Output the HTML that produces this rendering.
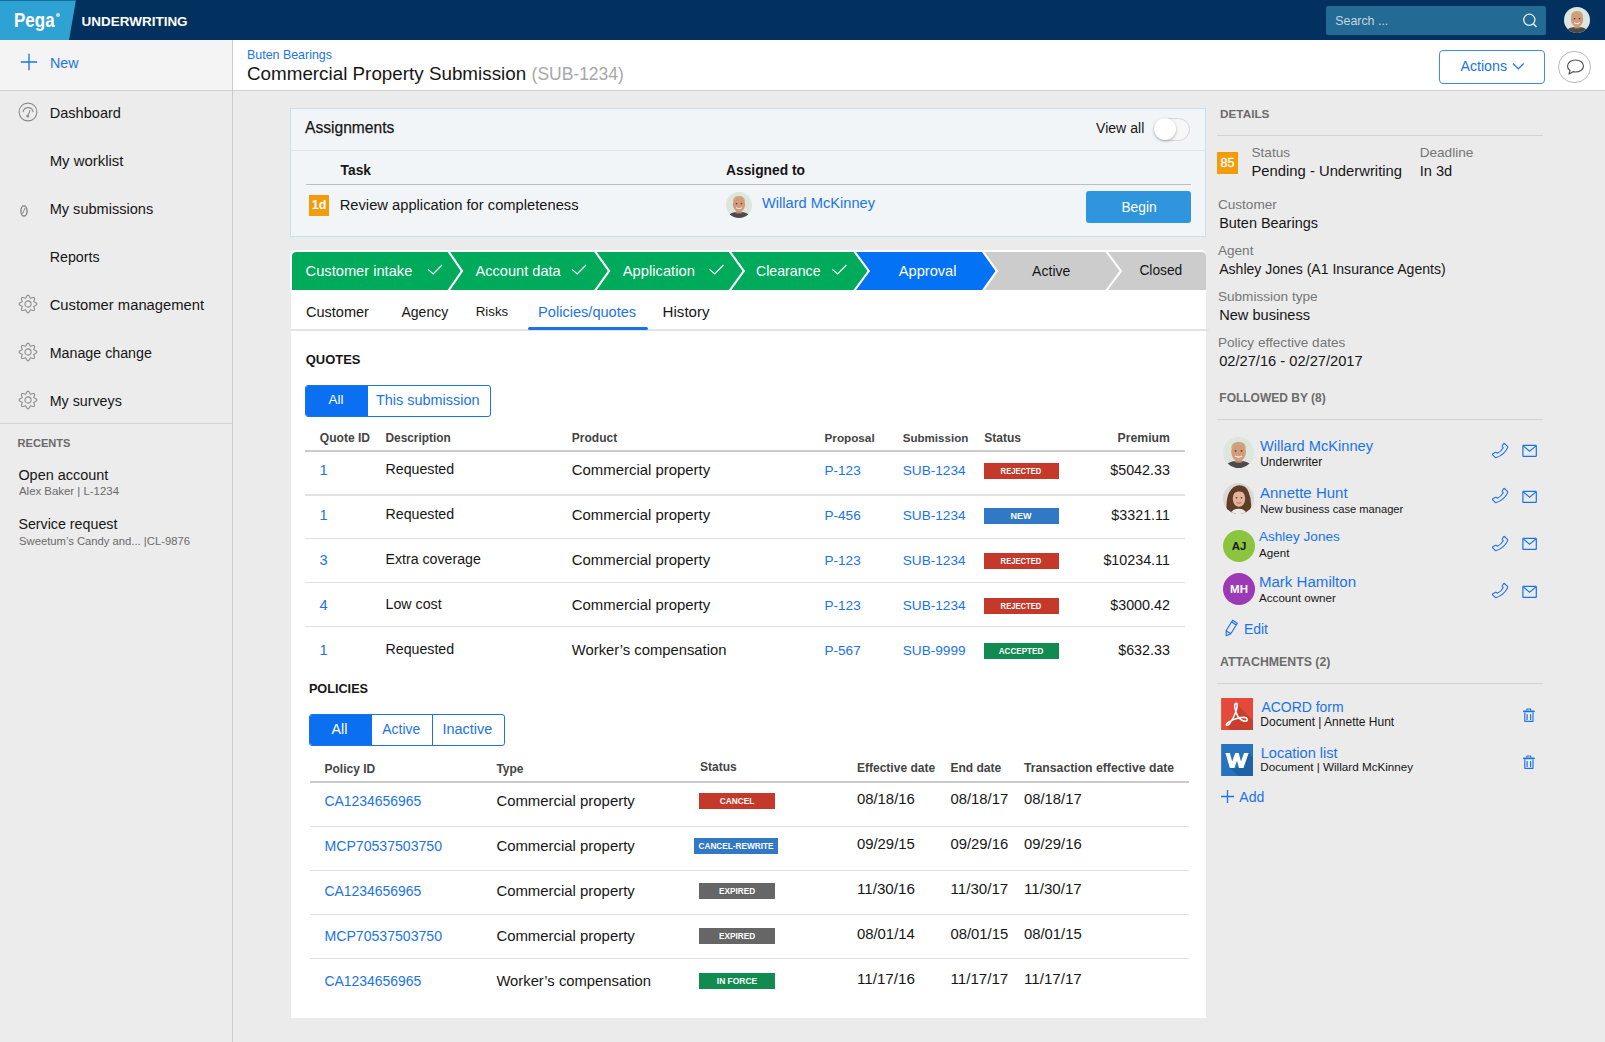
<!DOCTYPE html><html><head><meta charset="utf-8"><style>*{box-sizing:border-box;margin:0;padding:0}html,body{width:1605px;height:1042px;overflow:hidden;background:#ebebeb;font-family:"Liberation Sans",sans-serif}.t{position:absolute;white-space:nowrap;line-height:20px}</style></head><body>
<div style="position:absolute;left:0px;top:0px;width:1605px;height:40px;background:#02305f"></div>
<svg style="position:absolute;left:0;top:0" width="80" height="40"><polygon points="0,0 76,0 69,40 0,40" fill="#2ea3d3"/><rect x="0" y="0" width="76" height="1" fill="#1b6b9a"/></svg>
<div class="t" style="left:14.2px;top:9.6px;font-size:19.5px;font-weight:bold;color:#fff;transform:scaleX(.872);transform-origin:0 0">Pega</div>
<div style="position:absolute;left:55.6px;top:13px;width:4.4px;height:4.4px;border-radius:50%;background:#bfe3f3"></div>
<div class="t" style="top:12.00px;font-size:13.47px;color:#fff;left:81.60px;font-weight:bold;">UNDERWRITING</div>
<div style="position:absolute;left:1326px;top:6px;width:220px;height:29px;background:#236b94;border-radius:2px"></div>
<div class="t" style="top:11.20px;font-size:12.38px;color:#c5d5e0;left:1335.30px;">Search ...</div>
<svg style="position:absolute;left:1520px;top:11px" width="20" height="20" viewBox="0 0 20 20"><circle cx="9.3" cy="8.8" r="5.6" fill="none" stroke="#e8eff4" stroke-width="1.3"/><line x1="13.3" y1="12.8" x2="16.5" y2="16" stroke="#e8eff4" stroke-width="1.4"/></svg>
<svg style="position:absolute;left:1564px;top:6.5px" width="26" height="26" viewBox="0 0 40 40"><defs><clipPath id="c157719.5"><circle cx="20" cy="20" r="20"/></clipPath></defs><g clip-path="url(#c157719.5)"><rect width="40" height="40" fill="#dde5df"/><path d="M2 40 Q4 33 13 31 L27 31 Q36 33 38 40z" fill="#4d4a47"/><rect x="16" y="26" width="8" height="7" fill="#c08a6c"/><ellipse cx="20" cy="19" rx="9.5" ry="12" fill="#d29c7c"/><path d="M10.5 15 Q11 6 20 6 Q29 6 29.5 15 Q27 9.5 20 10 Q13 9.5 10.5 15z" fill="#c9a77a"/><ellipse cx="16.2" cy="18" rx="1.3" ry=".9" fill="#4a3228"/><ellipse cx="23.8" cy="18" rx="1.3" ry=".9" fill="#4a3228"/><path d="M15.5 24.2 Q20 27.5 24.5 24.2" stroke="#fff" stroke-width="1.4" fill="none"/></g></svg>
<div style="position:absolute;left:0px;top:40px;width:232px;height:1002px;background:#ececec"></div>
<div style="position:absolute;left:232px;top:40px;width:1px;height:1002px;background:#cbcbcb"></div>
<div style="position:absolute;left:0px;top:40px;width:232px;height:50px;background:#f4f4f4"></div>
<div style="position:absolute;left:0px;top:90px;width:232px;height:1px;background:#d0d0d0"></div>
<svg style="position:absolute;left:20px;top:53px" width="18" height="18" viewBox="0 0 18 18"><path d="M9 .8V17.2M.8 9H17.2" stroke="#1b73e8" stroke-width="1.3"/></svg>
<div class="t" style="top:52.50px;font-size:14.25px;color:#1b73e8;left:50.00px;">New</div>
<svg style="position:absolute;left:18px;top:102px" width="20" height="20" viewBox="0 0 20 20"><circle cx="10" cy="10" r="8.9" fill="none" stroke="#8c8c8c" stroke-width="1.1"/><path d="M5.1 9.7 A5.1 5.1 0 0 1 15.1 9.7" fill="none" stroke="#8c8c8c" stroke-width="1.1" stroke-linecap="round"/><path d="M12.1 8.3 L10.1 13.4" stroke="#8c8c8c" stroke-width="1.1"/><circle cx="9.8" cy="13.9" r="1.5" fill="#8c8c8c"/></svg>
<div class="t" style="top:102.60px;font-size:14.57px;color:#161616;left:49.70px;">Dashboard</div>
<div class="t" style="top:150.60px;font-size:14.93px;color:#161616;left:49.70px;">My worklist</div>
<div class="t" style="top:198.60px;font-size:14.56px;color:#161616;left:49.70px;">My submissions</div>
<div class="t" style="top:246.60px;font-size:14.28px;color:#161616;left:49.70px;">Reports</div>
<div class="t" style="top:294.60px;font-size:14.79px;color:#161616;left:49.70px;">Customer management</div>
<div class="t" style="top:342.60px;font-size:14.26px;color:#161616;left:49.70px;">Manage change</div>
<div class="t" style="top:390.60px;font-size:14.28px;color:#161616;left:49.70px;">My surveys</div>
<svg style="position:absolute;left:18px;top:200px" width="14" height="20" viewBox="0 0 14 20"><ellipse cx="6" cy="10.9" rx="3.1" ry="5.1" fill="none" stroke="#8c8c8c" stroke-width="1.5"/><path d="M7.2 7.6 L4.6 13.6" stroke="#8c8c8c" stroke-width="1.1"/></svg>
<svg style="position:absolute;left:18px;top:293.5px" width="20" height="20" viewBox="0 0 20 20"><path d="M10.00 1.15 L10.35 1.22 L10.68 1.42 L10.98 1.72 L11.25 2.11 L11.48 2.55 L11.68 2.99 L11.86 3.39 L12.04 3.73 L12.22 3.99 L12.43 4.13 L12.68 4.18 L12.99 4.13 L13.35 4.01 L13.77 3.85 L14.22 3.68 L14.69 3.54 L15.16 3.45 L15.59 3.45 L15.97 3.55 L16.26 3.74 L16.45 4.03 L16.55 4.41 L16.55 4.84 L16.46 5.31 L16.32 5.78 L16.15 6.23 L15.99 6.65 L15.87 7.01 L15.82 7.32 L15.87 7.57 L16.01 7.78 L16.27 7.96 L16.61 8.14 L17.01 8.32 L17.45 8.52 L17.89 8.75 L18.28 9.02 L18.58 9.32 L18.78 9.65 L18.85 10.00 L18.78 10.35 L18.58 10.68 L18.28 10.98 L17.89 11.25 L17.45 11.48 L17.01 11.68 L16.61 11.86 L16.27 12.04 L16.01 12.22 L15.87 12.43 L15.82 12.68 L15.87 12.99 L15.99 13.35 L16.15 13.77 L16.32 14.22 L16.46 14.69 L16.55 15.16 L16.55 15.59 L16.45 15.97 L16.26 16.26 L15.97 16.45 L15.59 16.55 L15.16 16.55 L14.69 16.46 L14.22 16.32 L13.77 16.15 L13.35 15.99 L12.99 15.87 L12.68 15.82 L12.43 15.87 L12.22 16.01 L12.04 16.27 L11.86 16.61 L11.68 17.01 L11.48 17.45 L11.25 17.89 L10.98 18.28 L10.68 18.58 L10.35 18.78 L10.00 18.85 L9.65 18.78 L9.32 18.58 L9.02 18.28 L8.75 17.89 L8.52 17.45 L8.32 17.01 L8.14 16.61 L7.96 16.27 L7.78 16.01 L7.57 15.87 L7.32 15.82 L7.01 15.87 L6.65 15.99 L6.23 16.15 L5.78 16.32 L5.31 16.46 L4.84 16.55 L4.41 16.55 L4.03 16.45 L3.74 16.26 L3.55 15.97 L3.45 15.59 L3.45 15.16 L3.54 14.69 L3.68 14.22 L3.85 13.77 L4.01 13.35 L4.13 12.99 L4.18 12.68 L4.13 12.43 L3.99 12.22 L3.73 12.04 L3.39 11.86 L2.99 11.68 L2.55 11.48 L2.11 11.25 L1.72 10.98 L1.42 10.68 L1.22 10.35 L1.15 10.00 L1.22 9.65 L1.42 9.32 L1.72 9.02 L2.11 8.75 L2.55 8.52 L2.99 8.32 L3.39 8.14 L3.73 7.96 L3.99 7.78 L4.13 7.57 L4.18 7.32 L4.13 7.01 L4.01 6.65 L3.85 6.23 L3.68 5.78 L3.54 5.31 L3.45 4.84 L3.45 4.41 L3.55 4.03 L3.74 3.74 L4.03 3.55 L4.41 3.45 L4.84 3.45 L5.31 3.54 L5.78 3.68 L6.23 3.85 L6.65 4.01 L7.01 4.13 L7.32 4.18 L7.57 4.13 L7.78 3.99 L7.96 3.73 L8.14 3.39 L8.32 2.99 L8.52 2.55 L8.75 2.11 L9.02 1.72 L9.32 1.42 L9.65 1.22z" fill="none" stroke="#8c8c8c" stroke-width="1.1" stroke-linejoin="round"/><circle cx="10" cy="10" r="3.1" fill="none" stroke="#8c8c8c" stroke-width="1.1"/></svg>
<svg style="position:absolute;left:18px;top:341.5px" width="20" height="20" viewBox="0 0 20 20"><path d="M10.00 1.15 L10.35 1.22 L10.68 1.42 L10.98 1.72 L11.25 2.11 L11.48 2.55 L11.68 2.99 L11.86 3.39 L12.04 3.73 L12.22 3.99 L12.43 4.13 L12.68 4.18 L12.99 4.13 L13.35 4.01 L13.77 3.85 L14.22 3.68 L14.69 3.54 L15.16 3.45 L15.59 3.45 L15.97 3.55 L16.26 3.74 L16.45 4.03 L16.55 4.41 L16.55 4.84 L16.46 5.31 L16.32 5.78 L16.15 6.23 L15.99 6.65 L15.87 7.01 L15.82 7.32 L15.87 7.57 L16.01 7.78 L16.27 7.96 L16.61 8.14 L17.01 8.32 L17.45 8.52 L17.89 8.75 L18.28 9.02 L18.58 9.32 L18.78 9.65 L18.85 10.00 L18.78 10.35 L18.58 10.68 L18.28 10.98 L17.89 11.25 L17.45 11.48 L17.01 11.68 L16.61 11.86 L16.27 12.04 L16.01 12.22 L15.87 12.43 L15.82 12.68 L15.87 12.99 L15.99 13.35 L16.15 13.77 L16.32 14.22 L16.46 14.69 L16.55 15.16 L16.55 15.59 L16.45 15.97 L16.26 16.26 L15.97 16.45 L15.59 16.55 L15.16 16.55 L14.69 16.46 L14.22 16.32 L13.77 16.15 L13.35 15.99 L12.99 15.87 L12.68 15.82 L12.43 15.87 L12.22 16.01 L12.04 16.27 L11.86 16.61 L11.68 17.01 L11.48 17.45 L11.25 17.89 L10.98 18.28 L10.68 18.58 L10.35 18.78 L10.00 18.85 L9.65 18.78 L9.32 18.58 L9.02 18.28 L8.75 17.89 L8.52 17.45 L8.32 17.01 L8.14 16.61 L7.96 16.27 L7.78 16.01 L7.57 15.87 L7.32 15.82 L7.01 15.87 L6.65 15.99 L6.23 16.15 L5.78 16.32 L5.31 16.46 L4.84 16.55 L4.41 16.55 L4.03 16.45 L3.74 16.26 L3.55 15.97 L3.45 15.59 L3.45 15.16 L3.54 14.69 L3.68 14.22 L3.85 13.77 L4.01 13.35 L4.13 12.99 L4.18 12.68 L4.13 12.43 L3.99 12.22 L3.73 12.04 L3.39 11.86 L2.99 11.68 L2.55 11.48 L2.11 11.25 L1.72 10.98 L1.42 10.68 L1.22 10.35 L1.15 10.00 L1.22 9.65 L1.42 9.32 L1.72 9.02 L2.11 8.75 L2.55 8.52 L2.99 8.32 L3.39 8.14 L3.73 7.96 L3.99 7.78 L4.13 7.57 L4.18 7.32 L4.13 7.01 L4.01 6.65 L3.85 6.23 L3.68 5.78 L3.54 5.31 L3.45 4.84 L3.45 4.41 L3.55 4.03 L3.74 3.74 L4.03 3.55 L4.41 3.45 L4.84 3.45 L5.31 3.54 L5.78 3.68 L6.23 3.85 L6.65 4.01 L7.01 4.13 L7.32 4.18 L7.57 4.13 L7.78 3.99 L7.96 3.73 L8.14 3.39 L8.32 2.99 L8.52 2.55 L8.75 2.11 L9.02 1.72 L9.32 1.42 L9.65 1.22z" fill="none" stroke="#8c8c8c" stroke-width="1.1" stroke-linejoin="round"/><circle cx="10" cy="10" r="3.1" fill="none" stroke="#8c8c8c" stroke-width="1.1"/></svg>
<svg style="position:absolute;left:18px;top:389.5px" width="20" height="20" viewBox="0 0 20 20"><path d="M10.00 1.15 L10.35 1.22 L10.68 1.42 L10.98 1.72 L11.25 2.11 L11.48 2.55 L11.68 2.99 L11.86 3.39 L12.04 3.73 L12.22 3.99 L12.43 4.13 L12.68 4.18 L12.99 4.13 L13.35 4.01 L13.77 3.85 L14.22 3.68 L14.69 3.54 L15.16 3.45 L15.59 3.45 L15.97 3.55 L16.26 3.74 L16.45 4.03 L16.55 4.41 L16.55 4.84 L16.46 5.31 L16.32 5.78 L16.15 6.23 L15.99 6.65 L15.87 7.01 L15.82 7.32 L15.87 7.57 L16.01 7.78 L16.27 7.96 L16.61 8.14 L17.01 8.32 L17.45 8.52 L17.89 8.75 L18.28 9.02 L18.58 9.32 L18.78 9.65 L18.85 10.00 L18.78 10.35 L18.58 10.68 L18.28 10.98 L17.89 11.25 L17.45 11.48 L17.01 11.68 L16.61 11.86 L16.27 12.04 L16.01 12.22 L15.87 12.43 L15.82 12.68 L15.87 12.99 L15.99 13.35 L16.15 13.77 L16.32 14.22 L16.46 14.69 L16.55 15.16 L16.55 15.59 L16.45 15.97 L16.26 16.26 L15.97 16.45 L15.59 16.55 L15.16 16.55 L14.69 16.46 L14.22 16.32 L13.77 16.15 L13.35 15.99 L12.99 15.87 L12.68 15.82 L12.43 15.87 L12.22 16.01 L12.04 16.27 L11.86 16.61 L11.68 17.01 L11.48 17.45 L11.25 17.89 L10.98 18.28 L10.68 18.58 L10.35 18.78 L10.00 18.85 L9.65 18.78 L9.32 18.58 L9.02 18.28 L8.75 17.89 L8.52 17.45 L8.32 17.01 L8.14 16.61 L7.96 16.27 L7.78 16.01 L7.57 15.87 L7.32 15.82 L7.01 15.87 L6.65 15.99 L6.23 16.15 L5.78 16.32 L5.31 16.46 L4.84 16.55 L4.41 16.55 L4.03 16.45 L3.74 16.26 L3.55 15.97 L3.45 15.59 L3.45 15.16 L3.54 14.69 L3.68 14.22 L3.85 13.77 L4.01 13.35 L4.13 12.99 L4.18 12.68 L4.13 12.43 L3.99 12.22 L3.73 12.04 L3.39 11.86 L2.99 11.68 L2.55 11.48 L2.11 11.25 L1.72 10.98 L1.42 10.68 L1.22 10.35 L1.15 10.00 L1.22 9.65 L1.42 9.32 L1.72 9.02 L2.11 8.75 L2.55 8.52 L2.99 8.32 L3.39 8.14 L3.73 7.96 L3.99 7.78 L4.13 7.57 L4.18 7.32 L4.13 7.01 L4.01 6.65 L3.85 6.23 L3.68 5.78 L3.54 5.31 L3.45 4.84 L3.45 4.41 L3.55 4.03 L3.74 3.74 L4.03 3.55 L4.41 3.45 L4.84 3.45 L5.31 3.54 L5.78 3.68 L6.23 3.85 L6.65 4.01 L7.01 4.13 L7.32 4.18 L7.57 4.13 L7.78 3.99 L7.96 3.73 L8.14 3.39 L8.32 2.99 L8.52 2.55 L8.75 2.11 L9.02 1.72 L9.32 1.42 L9.65 1.22z" fill="none" stroke="#8c8c8c" stroke-width="1.1" stroke-linejoin="round"/><circle cx="10" cy="10" r="3.1" fill="none" stroke="#8c8c8c" stroke-width="1.1"/></svg>
<div style="position:absolute;left:0px;top:423px;width:232px;height:1px;background:#d2d2d2"></div>
<div class="t" style="top:433.30px;font-size:11.09px;color:#6b6b6b;left:17.50px;font-weight:bold;">RECENTS</div>
<div class="t" style="top:464.50px;font-size:14.45px;color:#161616;left:18.40px;">Open account</div>
<div class="t" style="top:481.20px;font-size:11.41px;color:#6a6a6a;left:19.00px;">Alex Baker | L-1234</div>
<div class="t" style="top:513.60px;font-size:14.25px;color:#161616;left:18.40px;">Service request</div>
<div class="t" style="top:531.30px;font-size:11.25px;color:#6a6a6a;left:19.00px;">Sweetum’s Candy and... |CL-9876</div>
<div style="position:absolute;left:233px;top:40px;width:1372px;height:50px;background:#fff"></div>
<div style="position:absolute;left:233px;top:89.5px;width:1372px;height:1px;background:#cfcfcf"></div>
<div class="t" style="top:45.20px;font-size:12.43px;color:#1b73e8;left:247.00px;">Buten Bearings</div>
<div class="t" style="top:64.20px;font-size:18.82px;color:#161616;left:247.00px;">Commercial Property Submission</div>
<div class="t" style="top:64.20px;font-size:17.48px;color:#a8a8a8;left:531.60px;">(SUB-1234)</div>
<div style="position:absolute;left:1439.4px;top:50.2px;width:106px;height:33.4px;border:1.3px solid #3b8bf0;border-radius:4px;background:#fff"></div>
<div class="t" style="top:56.00px;font-size:14.24px;color:#1b73e8;left:1460.40px;">Actions</div>
<svg style="position:absolute;left:1512px;top:62px" width="13" height="9" viewBox="0 0 13 9"><path d="M1 1.5 L6.3 7 L11.6 1.5" fill="none" stroke="#1b73e8" stroke-width="1.2"/></svg>
<div style="position:absolute;left:1558.3px;top:50.5px;width:32.3px;height:32.3px;border:1px solid #b9b9b9;border-radius:50%;background:#fff"></div>
<svg style="position:absolute;left:1566px;top:58px" width="19" height="18" viewBox="0 0 19 18"><path d="M9.5 2 C14 2 17.5 4.6 17.5 8 C17.5 11.4 14 14 9.5 14 C8.6 14 7.8 13.9 7 13.7 L3 16 L4 12.6 C2.5 11.5 1.5 9.9 1.5 8 C1.5 4.6 5 2 9.5 2z" fill="none" stroke="#555" stroke-width="1.2" stroke-linejoin="round"/></svg>
<div style="position:absolute;left:290px;top:108px;width:916px;height:129px;background:#f2f5f8;border:1px solid #c5e0ef"></div>
<div style="position:absolute;left:291px;top:150px;width:914px;height:1px;background:#dfe3e6"></div>
<div class="t" style="top:118.30px;font-size:15.60px;color:#161616;left:305.00px;-webkit-text-stroke:.25px #1f1f1f">Assignments</div>
<div class="t" style="top:117.60px;font-size:14.09px;color:#161616;left:1096.00px;">View all</div>
<div style="position:absolute;left:1153.5px;top:117.5px;width:36.5px;height:23px;border-radius:12px;background:#f7f7f7;border:1px solid #d6d6d6"></div>
<div style="position:absolute;left:1153.5px;top:118px;width:22px;height:22px;border-radius:50%;background:#fff;box-shadow:0 1px 3px rgba(0,0,0,.3)"></div>
<div class="t" style="top:161.30px;font-size:13.79px;color:#161616;left:340.60px;font-weight:bold;">Task</div>
<div class="t" style="top:161.30px;font-size:13.80px;color:#161616;left:726.00px;font-weight:bold;">Assigned to</div>
<div style="position:absolute;left:306px;top:184px;width:885px;height:1px;background:#bdbdbd"></div>
<div style="position:absolute;left:309px;top:194.5px;width:20px;height:21px;background:#f39c0b"></div>
<div class="t" style="top:195.00px;font-size:12.50px;color:#fff;left:309.00px;font-weight:bold;width:20px;text-align:center">1d</div>
<div class="t" style="top:195.10px;font-size:14.73px;color:#161616;left:339.70px;">Review application for completeness</div>
<svg style="position:absolute;left:725.5px;top:192px" width="26" height="26" viewBox="0 0 40 40"><defs><clipPath id="c738.5205"><circle cx="20" cy="20" r="20"/></clipPath></defs><g clip-path="url(#c738.5205)"><rect width="40" height="40" fill="#dde5df"/><path d="M2 40 Q4 33 13 31 L27 31 Q36 33 38 40z" fill="#4d4a47"/><rect x="16" y="26" width="8" height="7" fill="#c08a6c"/><ellipse cx="20" cy="19" rx="9.5" ry="12" fill="#d29c7c"/><path d="M10.5 15 Q11 6 20 6 Q29 6 29.5 15 Q27 9.5 20 10 Q13 9.5 10.5 15z" fill="#c9a77a"/><ellipse cx="16.2" cy="18" rx="1.3" ry=".9" fill="#4a3228"/><ellipse cx="23.8" cy="18" rx="1.3" ry=".9" fill="#4a3228"/><path d="M15.5 24.2 Q20 27.5 24.5 24.2" stroke="#fff" stroke-width="1.4" fill="none"/></g></svg>
<div class="t" style="top:192.80px;font-size:14.63px;color:#1b73e8;left:762.00px;">Willard McKinney</div>
<div style="position:absolute;left:1086px;top:191px;width:105px;height:32px;background:#2f96de;border-radius:3px"></div>
<div class="t" style="top:197.90px;font-size:13.80px;color:#fff;left:1121.40px;">Begin</div>
<div style="position:absolute;left:291px;top:270px;width:915px;height:748.3px;background:#fff"></div>
<div style="position:absolute;left:290.2px;top:250.2px;width:916.1px;height:41px;background:#fff;border-radius:5px 5px 0 0"></div>
<svg style="position:absolute;left:0;top:0" width="1210" height="300"><defs><clipPath id="stc"><path d="M292 290 V256.5 Q292 252 296.5 252 H1201.5 Q1206 252 1206 256.5 V290z"/></clipPath></defs><g clip-path="url(#stc)"><polygon points="292.0,252.0 447.6,252.0 460.7,271.0 447.6,290.0 292.0,290.0" fill="#00aa5b"/><polygon points="450.2,252.0 594.2,252.0 607.8,271.0 594.2,290.0 450.2,290.0 463.3,271.0" fill="#00aa5b"/><polygon points="596.8,252.0 728.8,252.0 742.5,271.0 728.8,290.0 596.8,290.0 610.4,271.0" fill="#00aa5b"/><polygon points="731.4,252.0 853.5,252.0 867.5,271.0 853.5,290.0 731.4,290.0 745.1,271.0" fill="#00aa5b"/><polygon points="856.1,252.0 982.0,252.0 995.5,271.0 982.0,290.0 856.1,290.0 870.1,271.0" fill="#0372f5"/><polygon points="984.6,252.0 1105.5,252.0 1119.6,271.0 1105.5,290.0 984.6,290.0 998.1,271.0" fill="#cccccc"/><polygon points="1108.1,252.0 1206.0,252.0 1206.0,290.0 1108.1,290.0 1122.2,271.0" fill="#cccccc"/></g><path d="M428 269.4 L433.2 274 L442 265" fill="none" stroke="#fff" stroke-width="1.2"/><path d="M572 269.4 L577.2 274 L586 265" fill="none" stroke="#fff" stroke-width="1.2"/><path d="M709.5 269.4 L714.7 274 L723.5 265" fill="none" stroke="#fff" stroke-width="1.2"/><path d="M832.4 269.4 L837.6 274 L846.4 265" fill="none" stroke="#fff" stroke-width="1.2"/></svg>
<div class="t" style="top:260.60px;font-size:14.67px;color:#fff;left:305.60px;">Customer intake</div>
<div class="t" style="top:260.60px;font-size:14.60px;color:#fff;left:475.50px;">Account data</div>
<div class="t" style="top:260.60px;font-size:14.74px;color:#fff;left:622.80px;">Application</div>
<div class="t" style="top:260.60px;font-size:14.17px;color:#fff;left:756.00px;">Clearance</div>
<div class="t" style="top:260.60px;font-size:14.62px;color:#fff;left:898.80px;">Approval</div>
<div class="t" style="top:260.60px;font-size:14.06px;color:#161616;left:1032.10px;">Active</div>
<div class="t" style="top:261.30px;font-size:13.78px;color:#161616;left:1139.40px;">Closed</div>
<div style="position:absolute;left:291px;top:329px;width:917.6px;height:1.8px;background:#e3e3e3"></div>
<div class="t" style="top:302.00px;font-size:14.53px;color:#161616;left:306.00px;">Customer</div>
<div class="t" style="top:302.00px;font-size:14.00px;color:#161616;left:401.50px;">Agency</div>
<div class="t" style="top:302.00px;font-size:13.34px;color:#161616;left:475.70px;">Risks</div>
<div class="t" style="top:302.00px;font-size:14.58px;color:#1b73e8;left:538.10px;">Policies/quotes</div>
<div class="t" style="top:302.00px;font-size:15.11px;color:#161616;left:662.60px;">History</div>
<div style="position:absolute;left:527.7px;top:327.3px;width:120px;height:2.7px;background:#1b73e8;border-radius:2px"></div>
<div class="t" style="top:350.00px;font-size:12.98px;color:#161616;left:305.70px;font-weight:bold;">QUOTES</div>
<div style="position:absolute;left:305px;top:385px;width:186px;height:32px;border:1px solid #1b73e8;border-radius:3px;background:#fff;overflow:hidden">
<div style="position:absolute;left:0;top:0;width:62px;height:100%;background:#0a6ff0"></div>
</div>
<div class="t" style="top:389.80px;font-size:13.41px;color:#fff;left:328.50px;">All</div>
<div class="t" style="top:389.80px;font-size:14.44px;color:#1b73e8;left:376.00px;">This submission</div>
<div class="t" style="top:427.50px;font-size:12.07px;color:#444;left:319.80px;font-weight:bold;">Quote ID</div>
<div class="t" style="top:427.50px;font-size:11.87px;color:#444;left:385.50px;font-weight:bold;">Description</div>
<div class="t" style="top:427.50px;font-size:12.00px;color:#444;left:571.80px;font-weight:bold;">Product</div>
<div class="t" style="top:427.50px;font-size:11.73px;color:#444;left:824.50px;font-weight:bold;">Proposal</div>
<div class="t" style="top:427.50px;font-size:11.59px;color:#444;left:902.70px;font-weight:bold;">Submission</div>
<div class="t" style="top:427.50px;font-size:12.00px;color:#444;left:984.30px;font-weight:bold;">Status</div>
<div class="t" style="top:427.50px;font-size:12.25px;color:#444;right:435.10px;font-weight:bold;">Premium</div>
<div style="position:absolute;left:305px;top:450px;width:880px;height:2px;background:#cbcbcb"></div>
<div style="position:absolute;left:305px;top:494.3px;width:880px;height:1.3px;background:#e2e2e2"></div>
<div style="position:absolute;left:305px;top:538.1px;width:880px;height:1.3px;background:#e2e2e2"></div>
<div style="position:absolute;left:305px;top:582.1px;width:880px;height:1.3px;background:#e2e2e2"></div>
<div style="position:absolute;left:305px;top:625.9px;width:880px;height:1.3px;background:#e2e2e2"></div>
<div class="t" style="top:459.70px;font-size:14.60px;color:#1b73e8;left:319.60px;">1</div>
<div class="t" style="top:459.00px;font-size:14.20px;color:#161616;left:385.50px;">Requested</div>
<div class="t" style="top:460.00px;font-size:14.91px;color:#161616;left:571.80px;">Commercial property</div>
<div class="t" style="top:461.00px;font-size:13.57px;color:#1b73e8;left:824.50px;">P-123</div>
<div class="t" style="top:461.00px;font-size:13.65px;color:#1b73e8;left:902.70px;">SUB-1234</div>
<div style="position:absolute;left:983.5px;top:463px;width:75.3px;height:16.2px;background:#c4392a"></div>
<div class="t" style="left:983.5px;top:461.1px;width:75.3px;text-align:center;font-size:9.9px;font-weight:bold;color:#fff"><span style="position:absolute;left:50%;top:0;transform:translateX(-50%) scaleX(0.774)">REJECTED</span></div>
<div class="t" style="top:460.00px;font-size:14.30px;color:#161616;right:435.10px;">$5042.33</div>
<div class="t" style="top:504.70px;font-size:14.60px;color:#1b73e8;left:319.60px;">1</div>
<div class="t" style="top:504.00px;font-size:14.20px;color:#161616;left:385.50px;">Requested</div>
<div class="t" style="top:505.00px;font-size:14.91px;color:#161616;left:571.80px;">Commercial property</div>
<div class="t" style="top:506.00px;font-size:13.57px;color:#1b73e8;left:824.50px;">P-456</div>
<div class="t" style="top:506.00px;font-size:13.65px;color:#1b73e8;left:902.70px;">SUB-1234</div>
<div style="position:absolute;left:983.5px;top:508px;width:75.3px;height:16.2px;background:#3179c4"></div>
<div class="t" style="left:983.5px;top:506.1px;width:75.3px;text-align:center;font-size:9.9px;font-weight:bold;color:#fff"><span style="position:absolute;left:50%;top:0;transform:translateX(-50%) scaleX(0.909)">NEW</span></div>
<div class="t" style="top:505.00px;font-size:14.30px;color:#161616;right:435.10px;">$3321.11</div>
<div class="t" style="top:549.70px;font-size:14.60px;color:#1b73e8;left:319.60px;">3</div>
<div class="t" style="top:549.00px;font-size:14.18px;color:#161616;left:385.50px;">Extra coverage</div>
<div class="t" style="top:550.00px;font-size:14.91px;color:#161616;left:571.80px;">Commercial property</div>
<div class="t" style="top:551.00px;font-size:13.57px;color:#1b73e8;left:824.50px;">P-123</div>
<div class="t" style="top:551.00px;font-size:13.65px;color:#1b73e8;left:902.70px;">SUB-1234</div>
<div style="position:absolute;left:983.5px;top:553px;width:75.3px;height:16.2px;background:#c4392a"></div>
<div class="t" style="left:983.5px;top:551.1px;width:75.3px;text-align:center;font-size:9.9px;font-weight:bold;color:#fff"><span style="position:absolute;left:50%;top:0;transform:translateX(-50%) scaleX(0.774)">REJECTED</span></div>
<div class="t" style="top:550.00px;font-size:14.30px;color:#161616;right:435.10px;">$10234.11</div>
<div class="t" style="top:594.70px;font-size:14.60px;color:#1b73e8;left:319.60px;">4</div>
<div class="t" style="top:594.00px;font-size:14.24px;color:#161616;left:385.50px;">Low cost</div>
<div class="t" style="top:595.00px;font-size:14.91px;color:#161616;left:571.80px;">Commercial property</div>
<div class="t" style="top:596.00px;font-size:13.57px;color:#1b73e8;left:824.50px;">P-123</div>
<div class="t" style="top:596.00px;font-size:13.65px;color:#1b73e8;left:902.70px;">SUB-1234</div>
<div style="position:absolute;left:983.5px;top:598px;width:75.3px;height:16.2px;background:#c4392a"></div>
<div class="t" style="left:983.5px;top:596.1px;width:75.3px;text-align:center;font-size:9.9px;font-weight:bold;color:#fff"><span style="position:absolute;left:50%;top:0;transform:translateX(-50%) scaleX(0.774)">REJECTED</span></div>
<div class="t" style="top:595.00px;font-size:14.30px;color:#161616;right:435.10px;">$3000.42</div>
<div class="t" style="top:639.70px;font-size:14.60px;color:#1b73e8;left:319.60px;">1</div>
<div class="t" style="top:639.00px;font-size:14.20px;color:#161616;left:385.50px;">Requested</div>
<div class="t" style="top:640.00px;font-size:14.80px;color:#161616;left:571.80px;">Worker’s compensation</div>
<div class="t" style="top:641.00px;font-size:13.57px;color:#1b73e8;left:824.50px;">P-567</div>
<div class="t" style="top:641.00px;font-size:13.65px;color:#1b73e8;left:902.70px;">SUB-9999</div>
<div style="position:absolute;left:983.5px;top:643px;width:75.3px;height:16.2px;background:#118b4f"></div>
<div class="t" style="left:983.5px;top:641.1px;width:75.3px;text-align:center;font-size:9.9px;font-weight:bold;color:#fff"><span style="position:absolute;left:50%;top:0;transform:translateX(-50%) scaleX(0.821)">ACCEPTED</span></div>
<div class="t" style="top:640.00px;font-size:14.30px;color:#161616;right:435.10px;">$632.33</div>
<div class="t" style="top:679.00px;font-size:12.68px;color:#161616;left:308.90px;font-weight:bold;">POLICIES</div>
<div style="position:absolute;left:308.5px;top:714.4px;width:196px;height:31.7px;border:1px solid #1b73e8;border-radius:3px;background:#fff;overflow:hidden">
<div style="position:absolute;left:0;top:0;width:62.19999999999999px;height:100%;background:#0a6ff0"></div>
</div>
<div class="t" style="top:719.05px;font-size:14.22px;color:#fff;left:331.50px;">All</div>
<div style="position:absolute;left:431.6px;top:714.4px;width:1px;height:31.7px;background:#1b73e8"></div>
<div class="t" style="top:719.05px;font-size:13.92px;color:#1b73e8;left:382.30px;">Active</div>
<div class="t" style="top:719.05px;font-size:14.42px;color:#1b73e8;left:442.50px;">Inactive</div>
<div class="t" style="top:758.70px;font-size:12.00px;color:#444;left:324.50px;font-weight:bold;">Policy ID</div>
<div class="t" style="top:758.70px;font-size:12.00px;color:#444;left:496.40px;font-weight:bold;">Type</div>
<div class="t" style="top:756.90px;font-size:12.00px;color:#444;left:700.10px;font-weight:bold;">Status</div>
<div class="t" style="top:757.80px;font-size:12.06px;color:#444;left:856.90px;font-weight:bold;">Effective date</div>
<div class="t" style="top:757.80px;font-size:12.00px;color:#444;left:950.50px;font-weight:bold;">End date</div>
<div class="t" style="top:757.80px;font-size:12.22px;color:#444;left:1024.00px;font-weight:bold;">Transaction effective date</div>
<div style="position:absolute;left:310px;top:781px;width:879px;height:2px;background:#cbcbcb"></div>
<div style="position:absolute;left:310px;top:826px;width:879px;height:1.2px;background:#e2e2e2"></div>
<div style="position:absolute;left:310px;top:870px;width:879px;height:1.2px;background:#e2e2e2"></div>
<div style="position:absolute;left:310px;top:914px;width:879px;height:1.2px;background:#e2e2e2"></div>
<div style="position:absolute;left:310px;top:957.5px;width:879px;height:1.2px;background:#e2e2e2"></div>
<div class="t" style="top:791.00px;font-size:13.91px;color:#1b73e8;left:324.50px;">CA1234656965</div>
<div class="t" style="top:791.00px;font-size:14.91px;color:#161616;left:496.40px;">Commercial property</div>
<div style="position:absolute;left:699.1px;top:792.8px;width:75.8px;height:16.2px;background:#c4392a"></div>
<div class="t" style="left:699.1px;top:790.9px;width:75.8px;text-align:center;font-size:9.9px;font-weight:bold;color:#fff"><span style="position:absolute;left:50%;top:0;transform:translateX(-50%) scaleX(0.841)">CANCEL</span></div>
<div class="t" style="top:789.20px;font-size:14.90px;color:#161616;left:856.90px;">08/18/16</div>
<div class="t" style="top:789.20px;font-size:14.82px;color:#161616;left:950.50px;">08/18/17</div>
<div class="t" style="top:789.20px;font-size:14.82px;color:#161616;left:1024.00px;">08/18/17</div>
<div class="t" style="top:836.00px;font-size:14.10px;color:#1b73e8;left:324.50px;">MCP70537503750</div>
<div class="t" style="top:836.00px;font-size:14.91px;color:#161616;left:496.40px;">Commercial property</div>
<div style="position:absolute;left:694.3px;top:837.8px;width:84.2px;height:16.2px;background:#3179c4"></div>
<div class="t" style="left:694.3px;top:835.9px;width:84.2px;text-align:center;font-size:9.9px;font-weight:bold;color:#fff"><span style="position:absolute;left:50%;top:0;transform:translateX(-50%) scaleX(0.834)">CANCEL-REWRITE</span></div>
<div class="t" style="top:834.20px;font-size:14.90px;color:#161616;left:856.90px;">09/29/15</div>
<div class="t" style="top:834.20px;font-size:14.82px;color:#161616;left:950.50px;">09/29/16</div>
<div class="t" style="top:834.20px;font-size:14.82px;color:#161616;left:1024.00px;">09/29/16</div>
<div class="t" style="top:881.00px;font-size:13.91px;color:#1b73e8;left:324.50px;">CA1234656965</div>
<div class="t" style="top:881.00px;font-size:14.91px;color:#161616;left:496.40px;">Commercial property</div>
<div style="position:absolute;left:699.1px;top:882.8px;width:75.8px;height:16.2px;background:#666666"></div>
<div class="t" style="left:699.1px;top:880.9px;width:75.8px;text-align:center;font-size:9.9px;font-weight:bold;color:#fff"><span style="position:absolute;left:50%;top:0;transform:translateX(-50%) scaleX(0.835)">EXPIRED</span></div>
<div class="t" style="top:879.20px;font-size:15.19px;color:#161616;left:856.90px;">11/30/16</div>
<div class="t" style="top:879.20px;font-size:15.11px;color:#161616;left:950.50px;">11/30/17</div>
<div class="t" style="top:879.20px;font-size:15.11px;color:#161616;left:1024.00px;">11/30/17</div>
<div class="t" style="top:926.00px;font-size:14.10px;color:#1b73e8;left:324.50px;">MCP70537503750</div>
<div class="t" style="top:926.00px;font-size:14.91px;color:#161616;left:496.40px;">Commercial property</div>
<div style="position:absolute;left:699.1px;top:927.8px;width:75.8px;height:16.2px;background:#666666"></div>
<div class="t" style="left:699.1px;top:925.9px;width:75.8px;text-align:center;font-size:9.9px;font-weight:bold;color:#fff"><span style="position:absolute;left:50%;top:0;transform:translateX(-50%) scaleX(0.835)">EXPIRED</span></div>
<div class="t" style="top:924.20px;font-size:14.90px;color:#161616;left:856.90px;">08/01/14</div>
<div class="t" style="top:924.20px;font-size:14.82px;color:#161616;left:950.50px;">08/01/15</div>
<div class="t" style="top:924.20px;font-size:14.82px;color:#161616;left:1024.00px;">08/01/15</div>
<div class="t" style="top:971.00px;font-size:13.91px;color:#1b73e8;left:324.50px;">CA1234656965</div>
<div class="t" style="top:971.00px;font-size:14.80px;color:#161616;left:496.40px;">Worker’s compensation</div>
<div style="position:absolute;left:699.1px;top:972.8px;width:75.8px;height:16.2px;background:#118b4f"></div>
<div class="t" style="left:699.1px;top:970.9px;width:75.8px;text-align:center;font-size:9.9px;font-weight:bold;color:#fff"><span style="position:absolute;left:50%;top:0;transform:translateX(-50%) scaleX(0.856)">IN FORCE</span></div>
<div class="t" style="top:969.20px;font-size:15.19px;color:#161616;left:856.90px;">11/17/16</div>
<div class="t" style="top:969.20px;font-size:15.11px;color:#161616;left:950.50px;">11/17/17</div>
<div class="t" style="top:969.20px;font-size:15.11px;color:#161616;left:1024.00px;">11/17/17</div>
<div class="t" style="top:103.80px;font-size:11.78px;color:#6b6b6b;left:1220.00px;font-weight:bold;">DETAILS</div>
<div style="position:absolute;left:1217.3px;top:135px;width:325.5px;height:1.3px;background:#d2d2d2"></div>
<div style="position:absolute;left:1217px;top:152.4px;width:20.8px;height:21.4px;background:#f39c0b"></div>
<div class="t" style="top:153.00px;font-size:12.50px;color:#fff;left:1217.00px;width:20.8px;text-align:center;-webkit-text-stroke:.3px #fff">85</div>
<div class="t" style="top:143.40px;font-size:13.60px;color:#767676;left:1251.50px;">Status</div>
<div class="t" style="top:161.00px;font-size:14.80px;color:#161616;left:1251.50px;">Pending - Underwriting</div>
<div class="t" style="top:143.40px;font-size:13.60px;color:#767676;left:1419.70px;">Deadline</div>
<div class="t" style="top:161.00px;font-size:14.60px;color:#161616;left:1419.70px;">In 3d</div>
<div class="t" style="top:194.50px;font-size:13.60px;color:#767676;left:1217.90px;">Customer</div>
<div class="t" style="top:212.70px;font-size:14.45px;color:#161616;left:1219.20px;">Buten Bearings</div>
<div class="t" style="top:240.50px;font-size:13.60px;color:#767676;left:1217.90px;">Agent</div>
<div class="t" style="top:258.70px;font-size:14.05px;color:#161616;left:1219.20px;">Ashley Jones (A1 Insurance Agents)</div>
<div class="t" style="top:286.70px;font-size:13.60px;color:#767676;left:1217.90px;">Submission type</div>
<div class="t" style="top:304.90px;font-size:14.60px;color:#161616;left:1219.20px;">New business</div>
<div class="t" style="top:332.70px;font-size:13.60px;color:#767676;left:1217.90px;">Policy effective dates</div>
<div class="t" style="top:350.90px;font-size:14.67px;color:#161616;left:1219.20px;">02/27/16 - 02/27/2017</div>
<div class="t" style="top:387.90px;font-size:12.01px;color:#6b6b6b;left:1219.30px;font-weight:bold;">FOLLOWED BY (8)</div>
<div style="position:absolute;left:1217.4px;top:419px;width:325.2px;height:1.3px;background:#d2d2d2"></div>
<svg style="position:absolute;left:1223.0px;top:436.9px" width="31.2" height="31.2" viewBox="0 0 40 40"><defs><clipPath id="c1238.6452.5"><circle cx="20" cy="20" r="20"/></clipPath></defs><g clip-path="url(#c1238.6452.5)"><rect width="40" height="40" fill="#dde5df"/><path d="M2 40 Q4 33 13 31 L27 31 Q36 33 38 40z" fill="#4d4a47"/><rect x="16" y="26" width="8" height="7" fill="#c08a6c"/><ellipse cx="20" cy="19" rx="9.5" ry="12" fill="#d29c7c"/><path d="M10.5 15 Q11 6 20 6 Q29 6 29.5 15 Q27 9.5 20 10 Q13 9.5 10.5 15z" fill="#c9a77a"/><ellipse cx="16.2" cy="18" rx="1.3" ry=".9" fill="#4a3228"/><ellipse cx="23.8" cy="18" rx="1.3" ry=".9" fill="#4a3228"/><path d="M15.5 24.2 Q20 27.5 24.5 24.2" stroke="#fff" stroke-width="1.4" fill="none"/></g></svg>
<div class="t" style="top:435.70px;font-size:14.63px;color:#1b73e8;left:1260.00px;">Willard McKinney</div>
<div class="t" style="top:452.00px;font-size:12.00px;color:#161616;left:1260.20px;">Underwriter</div>
<svg style="position:absolute;left:1491px;top:441.5px" width="18" height="18" viewBox="0 0 18 18"><path d="M13.4 1.5 L16.5 4.3 Q17 4.9 16.6 5.7 C14.3 10.4 10.3 13.9 5.4 15.5 Q4.6 15.8 4 15.2 L1.6 12.9 Q1.2 12.3 1.9 11.8 L4.5 10.3 Q5.1 10 5.6 10.5 L6.5 11.3 C9.1 9.9 11 7.9 12.2 5.7 L11.4 4.9 Q11 4.4 11.3 3.8 L12.6 1.7 Q12.9 1.3 13.4 1.5z" fill="none" stroke="#1b73e8" stroke-width="1.1" stroke-linejoin="round"/></svg>
<svg style="position:absolute;left:1520.5px;top:444.0px" width="17" height="14" viewBox="0 0 17 14"><rect x="1.9" y="1.3" width="13.4" height="11" rx=".6" fill="none" stroke="#1b73e8" stroke-width="1.2"/><path d="M2.2 1.8 L8.6 7.2 L15 1.8" fill="none" stroke="#1b73e8" stroke-width="1.1"/></svg>
<svg style="position:absolute;left:1223.0px;top:482.7px" width="31.2" height="31.2" viewBox="0 0 40 40"><defs><clipPath id="c1238.6498.3"><circle cx="20" cy="20" r="20"/></clipPath></defs><g clip-path="url(#c1238.6498.3)"><rect width="40" height="40" fill="#ddd8d3"/><path d="M5 40 Q3 22 8 12 Q13 3 21 3 Q30 3 33 12 Q38 24 35 40z" fill="#5e3d29"/><ellipse cx="20.5" cy="20" rx="8" ry="10.5" fill="#e3b39b"/><path d="M12 15 Q14 6 21 6.5 Q28 7 29 15 Q25 10 19 11 Q14 12 12 15z" fill="#5e3d29"/><path d="M9 40 Q12 33 20 33 Q28 33 31 40z" fill="#efe9e6"/><ellipse cx="17.3" cy="19" rx="1.2" ry=".8" fill="#2a1a10"/><ellipse cx="23.7" cy="19" rx="1.2" ry=".8" fill="#2a1a10"/><path d="M17.5 25 Q20.5 27 23.5 25" stroke="#b55a5a" stroke-width="1.1" fill="none"/></g></svg>
<div class="t" style="top:483.00px;font-size:15.01px;color:#1b73e8;left:1260.00px;">Annette Hunt</div>
<div class="t" style="top:498.90px;font-size:11.15px;color:#161616;left:1260.20px;">New business case manager</div>
<svg style="position:absolute;left:1491px;top:487.3px" width="18" height="18" viewBox="0 0 18 18"><path d="M13.4 1.5 L16.5 4.3 Q17 4.9 16.6 5.7 C14.3 10.4 10.3 13.9 5.4 15.5 Q4.6 15.8 4 15.2 L1.6 12.9 Q1.2 12.3 1.9 11.8 L4.5 10.3 Q5.1 10 5.6 10.5 L6.5 11.3 C9.1 9.9 11 7.9 12.2 5.7 L11.4 4.9 Q11 4.4 11.3 3.8 L12.6 1.7 Q12.9 1.3 13.4 1.5z" fill="none" stroke="#1b73e8" stroke-width="1.1" stroke-linejoin="round"/></svg>
<svg style="position:absolute;left:1520.5px;top:489.8px" width="17" height="14" viewBox="0 0 17 14"><rect x="1.9" y="1.3" width="13.4" height="11" rx=".6" fill="none" stroke="#1b73e8" stroke-width="1.2"/><path d="M2.2 1.8 L8.6 7.2 L15 1.8" fill="none" stroke="#1b73e8" stroke-width="1.1"/></svg>
<div style="position:absolute;left:1223px;top:529.5px;width:32px;height:32px;border-radius:50%;background:#8bc43f"></div>
<div class="t" style="top:535.50px;font-size:11.50px;color:#1a1a1a;left:1223.00px;font-weight:bold;width:32px;text-align:center">AJ</div>
<div class="t" style="top:527.00px;font-size:13.62px;color:#1b73e8;left:1258.90px;">Ashley Jones</div>
<div class="t" style="top:543.30px;font-size:11.60px;color:#161616;left:1259.10px;">Agent</div>
<svg style="position:absolute;left:1491px;top:534.5px" width="18" height="18" viewBox="0 0 18 18"><path d="M13.4 1.5 L16.5 4.3 Q17 4.9 16.6 5.7 C14.3 10.4 10.3 13.9 5.4 15.5 Q4.6 15.8 4 15.2 L1.6 12.9 Q1.2 12.3 1.9 11.8 L4.5 10.3 Q5.1 10 5.6 10.5 L6.5 11.3 C9.1 9.9 11 7.9 12.2 5.7 L11.4 4.9 Q11 4.4 11.3 3.8 L12.6 1.7 Q12.9 1.3 13.4 1.5z" fill="none" stroke="#1b73e8" stroke-width="1.1" stroke-linejoin="round"/></svg>
<svg style="position:absolute;left:1520.5px;top:537.0px" width="17" height="14" viewBox="0 0 17 14"><rect x="1.9" y="1.3" width="13.4" height="11" rx=".6" fill="none" stroke="#1b73e8" stroke-width="1.2"/><path d="M2.2 1.8 L8.6 7.2 L15 1.8" fill="none" stroke="#1b73e8" stroke-width="1.1"/></svg>
<div style="position:absolute;left:1223px;top:573px;width:32px;height:32px;border-radius:50%;background:#9c39b5"></div>
<div class="t" style="top:579.00px;font-size:11.50px;color:#fff;left:1223.00px;font-weight:bold;width:32px;text-align:center">MH</div>
<div class="t" style="top:571.90px;font-size:15.08px;color:#1b73e8;left:1258.90px;">Mark Hamilton</div>
<div class="t" style="top:588.30px;font-size:11.60px;color:#161616;left:1259.10px;">Account owner</div>
<svg style="position:absolute;left:1491px;top:582px" width="18" height="18" viewBox="0 0 18 18"><path d="M13.4 1.5 L16.5 4.3 Q17 4.9 16.6 5.7 C14.3 10.4 10.3 13.9 5.4 15.5 Q4.6 15.8 4 15.2 L1.6 12.9 Q1.2 12.3 1.9 11.8 L4.5 10.3 Q5.1 10 5.6 10.5 L6.5 11.3 C9.1 9.9 11 7.9 12.2 5.7 L11.4 4.9 Q11 4.4 11.3 3.8 L12.6 1.7 Q12.9 1.3 13.4 1.5z" fill="none" stroke="#1b73e8" stroke-width="1.1" stroke-linejoin="round"/></svg>
<svg style="position:absolute;left:1520.5px;top:584.5px" width="17" height="14" viewBox="0 0 17 14"><rect x="1.9" y="1.3" width="13.4" height="11" rx=".6" fill="none" stroke="#1b73e8" stroke-width="1.2"/><path d="M2.2 1.8 L8.6 7.2 L15 1.8" fill="none" stroke="#1b73e8" stroke-width="1.1"/></svg>
<svg style="position:absolute;left:1224px;top:619px" width="15" height="18" viewBox="0 0 15 18"><path d="M8.6 1.2 L13.3 4.3 L6.8 14.8 L2.3 16.7 L2.1 11.7z M7.6 2.9 L12.3 6 M2.3 11.9 L6.6 14.6" fill="none" stroke="#1b73e8" stroke-width="1.15" stroke-linejoin="round"/></svg>
<div class="t" style="top:618.90px;font-size:13.99px;color:#1b73e8;left:1243.90px;">Edit</div>
<div class="t" style="top:652.00px;font-size:12.32px;color:#6b6b6b;left:1220.00px;font-weight:bold;">ATTACHMENTS (2)</div>
<div style="position:absolute;left:1217.4px;top:683px;width:325.2px;height:1.3px;background:#d2d2d2"></div>
<svg style="position:absolute;left:1220.5px;top:698.2px" width="32.3" height="32" viewBox="0 0 32 32"><rect width="32" height="32" fill="#e5493a"/><path d="M16 6.5 L32 22.5 V32 H9.5 L4.5 27 L10 22 L13.5 19.5 L16.5 13z" fill="#c43d2d" opacity=".85"/><path transform="translate(-1.1 -1.3) scale(1.03)" d="M15.6 6.5 Q13.6 6.5 14.4 11 Q15.2 15.5 17.6 19.5 Q20.5 23.8 24.5 23.8 Q27 23.6 26.3 21.6 Q25.5 19.6 20.5 20.2 Q13 21.4 7.6 25.2 Q5.6 26.8 6.3 27.6 Q7.2 28.4 9.3 26 Q13.5 20.5 15.6 14 Q17 9 16.6 7.4 Q16.3 6.5 15.6 6.5z" fill="none" stroke="#fff" stroke-width="1.5"/></svg>
<div class="t" style="top:697.00px;font-size:13.97px;color:#1b73e8;left:1261.40px;">ACORD form</div>
<div class="t" style="top:712.00px;font-size:12.01px;color:#161616;left:1260.30px;">Document | Annette Hunt</div>
<svg style="position:absolute;left:1220.5px;top:744px" width="32.3" height="32" viewBox="0 0 32 32"><rect width="32" height="32" fill="#2773c0"/><polygon points="27.5,8.9 32,13.4 32,32 17.5,32 9.5,24 22.3,24" fill="#1f5f9e" opacity=".85"/><polygon points="4.3,8.9 8.7,8.9 11,17.5 14.1,8.9 17.5,8.9 19.8,17.5 22.9,8.9 27.5,8.9 22.3,24 17.9,24 15.8,16.7 13.3,24 8.7,24" fill="#fff"/></svg>
<div class="t" style="top:742.80px;font-size:14.58px;color:#1b73e8;left:1260.70px;">Location list</div>
<div class="t" style="top:757.20px;font-size:11.68px;color:#161616;left:1260.30px;">Document | Willard McKinney</div>
<svg style="position:absolute;left:1522px;top:707.9px" width="14" height="15" viewBox="0 0 14 15"><rect x="1" y="2.4" width="11.8" height="1.8" rx=".8" fill="#1b73e8"/><path d="M4.9 2.6 V1 H8.7 V2.6 M2.8 4.4 V13.3 H11 V4.4" fill="none" stroke="#1b73e8" stroke-width="1.15" stroke-linejoin="round"/><path d="M5.1 6.6 V11.4 M8.6 6.6 V11.4" stroke="#1b73e8" stroke-width="1.2" stroke-linecap="round"/></svg>
<svg style="position:absolute;left:1522px;top:755px" width="14" height="15" viewBox="0 0 14 15"><rect x="1" y="2.4" width="11.8" height="1.8" rx=".8" fill="#1b73e8"/><path d="M4.9 2.6 V1 H8.7 V2.6 M2.8 4.4 V13.3 H11 V4.4" fill="none" stroke="#1b73e8" stroke-width="1.15" stroke-linejoin="round"/><path d="M5.1 6.6 V11.4 M8.6 6.6 V11.4" stroke="#1b73e8" stroke-width="1.2" stroke-linecap="round"/></svg>
<svg style="position:absolute;left:1221px;top:790.4px" width="13" height="13" viewBox="0 0 13 13"><path d="M6.5 0 V13 M0 6.5 H13" stroke="#1b73e8" stroke-width="1.3"/></svg>
<div class="t" style="top:786.80px;font-size:14.05px;color:#1b73e8;left:1239.30px;">Add</div>
</body></html>
